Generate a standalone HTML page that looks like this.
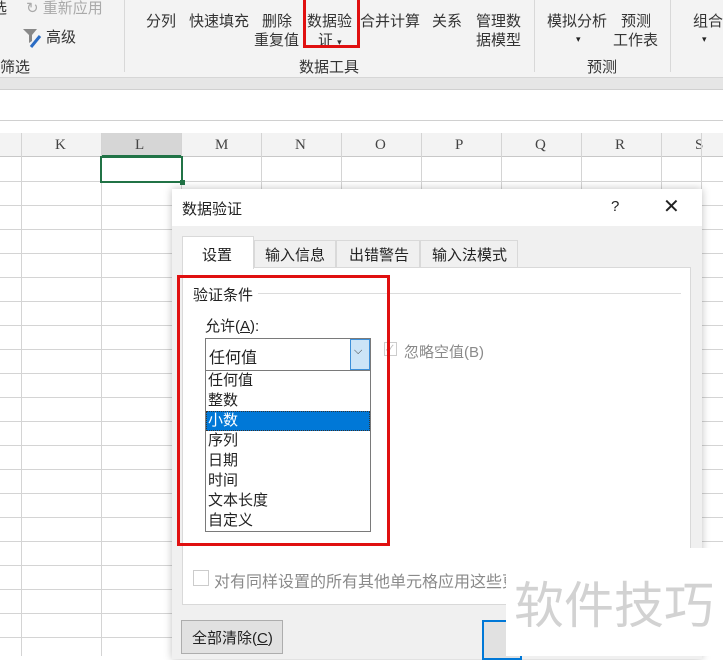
<!DOCTYPE html>
<html><head><meta charset="utf-8"><style>
*{margin:0;padding:0;box-sizing:border-box}
body{width:723px;height:656px;overflow:hidden;position:relative;background:#fff;font-family:"Liberation Sans","Noto Sans CJK SC",sans-serif;font-size:15px;color:#222}
.a{position:absolute;white-space:nowrap}
.rb{color:#333;font-size:15px}
.vl{position:absolute;width:1px;background:#d4d4d4}
.hl{position:absolute;height:1px;background:#d4d4d4}
</style></head><body>
<div class="a" style="left:0;top:0;width:723px;height:77px;background:#f3f3f3"></div>
<div class="a" style="left:0;top:77px;width:723px;height:13px;background:#e6e6e6;border-top:1px solid #d6d6d6;border-bottom:1px solid #d0d0d0"></div>
<div class="a" style="left:0;top:120px;width:723px;height:1px;background:#d0d0d0"></div>
<div class="vl" style="left:124px;top:0;height:72px;background:#d8d8d8"></div>
<div class="vl" style="left:534px;top:0;height:72px;background:#d8d8d8"></div>
<div class="vl" style="left:670px;top:0;height:72px;background:#d8d8d8"></div>
<span class="a rb" style="left:-8px;top:-3px">选</span>
<span class="a rb" style="left:26px;top:-3px;color:#aaa">↻ 重新应用</span>
<svg class="a" style="left:22px;top:27px" width="22" height="22" viewBox="0 0 22 22"><path d="M1 2h14l-5 6v6l-3 2V8z" fill="#888"/><path d="M9 20l9-11" stroke="#2b6cc4" stroke-width="3"/></svg>
<span class="a rb" style="left:46px;top:26px">高级</span>
<span class="a rb" style="left:0;top:56px">筛选</span>
<span class="a rb" style="left:146px;top:10px">分列</span>
<span class="a rb" style="left:189px;top:10px">快速填充</span>
<span class="a rb" style="left:262px;top:10px">删除</span>
<span class="a rb" style="left:254px;top:29px">重复值</span>
<span class="a rb" style="left:307px;top:10px">数据验</span>
<span class="a rb" style="left:318px;top:29px">证 <span style="font-size:9px">▾</span></span>
<span class="a rb" style="left:360px;top:10px">合并计算</span>
<span class="a rb" style="left:432px;top:10px">关系</span>
<span class="a rb" style="left:476px;top:10px">管理数</span>
<span class="a rb" style="left:476px;top:29px">据模型</span>
<span class="a rb" style="left:299px;top:56px">数据工具</span>
<span class="a rb" style="left:547px;top:10px">模拟分析</span>
<span class="a" style="left:576px;top:34px;font-size:9px">▾</span>
<span class="a rb" style="left:621px;top:10px">预测</span>
<span class="a rb" style="left:613px;top:29px">工作表</span>
<span class="a rb" style="left:587px;top:56px">预测</span>
<span class="a rb" style="left:693px;top:10px">组合</span>
<span class="a" style="left:702px;top:34px;font-size:9px">▾</span>
<div class="a" style="left:303px;top:-4px;width:57px;height:52px;border:3px solid #e01010"></div>
<div class="a" style="left:0;top:133px;width:723px;height:24px;background:#f3f3f3;border-bottom:1px solid #c8c8c8"></div>
<div class="a" style="left:101px;top:133px;width:81px;height:24px;background:#d6d6d6;border-bottom:2px solid #217346"></div>
<div id="g"></div>
<script>
var g=document.getElementById('g'),h='';
var cols=['K','L','M','N','O','P','Q','R','S'];
for(var i=0;i<9;i++){var x=21+i*80;h+='<div class="vl" style="left:'+x+'px;top:133px;height:523px"></div>';
h+='<span class="a" style="left:'+(x+34)+'px;top:137px;font-family:Liberation Serif,serif;font-size:15px;color:#444">'+cols[i]+'</span>';}
h+='<div class="vl" style="left:701px;top:133px;height:523px"></div>';
for(var y=181;y<656;y+=24)h+='<div class="hl" style="left:0;top:'+y+'px;width:723px"></div>';
g.innerHTML=h;
</script>
<div class="a" style="left:100px;top:156px;width:83px;height:27px;border:2px solid #217346"></div>
<div class="a" style="left:180px;top:180px;width:5px;height:5px;background:#217346"></div>
<div class="a" style="left:172px;top:189px;width:530px;height:470px;background:#f0f0f0;box-shadow:0 0 8px rgba(0,0,0,.25)"></div>
<div class="a" style="left:172px;top:189px;width:530px;height:37px;background:#fff"></div>
<span class="a" style="left:182px;top:198px">数据验证</span>
<span class="a" style="left:611px;top:198px;font-size:15px">?</span>
<span class="a" style="left:663px;top:194px;font-size:20px;font-weight:300">✕</span>
<div class="a" style="left:182px;top:267px;width:509px;height:338px;background:#fff;border:1px solid #d9d9d9"></div>
<div class="a" style="left:182px;top:236px;width:72px;height:33px;background:#fff;border:1px solid #d9d9d9;border-bottom:none"></div>
<div class="a" style="left:254px;top:240px;width:82px;height:28px;background:#f0f0f0;border:1px solid #d9d9d9"></div>
<div class="a" style="left:336px;top:240px;width:84px;height:28px;background:#f0f0f0;border:1px solid #d9d9d9"></div>
<div class="a" style="left:420px;top:240px;width:98px;height:28px;background:#f0f0f0;border:1px solid #d9d9d9"></div>
<span class="a" style="left:202px;top:244px">设置</span>
<span class="a" style="left:265px;top:244px">输入信息</span>
<span class="a" style="left:349px;top:244px">出错警告</span>
<span class="a" style="left:432px;top:244px">输入法模式</span>
<span class="a" style="left:193px;top:284px">验证条件</span>
<div class="hl" style="left:258px;top:293px;width:423px;background:#dcdcdc"></div>
<span class="a" style="left:205px;top:315px">允许(<u>A</u>):</span>
<div class="a" style="left:205px;top:338px;width:166px;height:33px;border:1px solid #7a7a7a;background:#fff"></div>
<span class="a" style="left:209px;top:344px;font-size:16px">任何值</span>
<div class="a" style="left:350px;top:339px;width:20px;height:31px;background:#cce4f7;border:1px solid #3c8fd9"></div>
<span class="a" style="left:354px;top:345px;font-size:11px;color:#333">⌵</span>
<div class="a" style="left:384px;top:342px;width:13px;height:14px;border:1px solid #ccc"></div>
<span class="a" style="left:386px;top:341px;font-size:11px;color:#bbb">✓</span>
<span class="a" style="left:404px;top:341px;color:#8a8a8a">忽略空值(B)</span>
<div class="a" style="left:205px;top:370px;width:166px;height:162px;border:1px solid #7a7a7a;background:#fff"></div>
<div class="a" style="left:206px;top:411px;width:164px;height:20px;background:#0078d7;border:1px dotted #333"></div>
<span class="a" style="left:208px;top:371px;line-height:20px;font-size:15px">任何值<br>整数<br><span style="color:#fff">小数</span><br>序列<br>日期<br>时间<br>文本长度<br>自定义</span>
<div class="a" style="left:177px;top:275px;width:213px;height:271px;border:3px solid #e01010"></div>
<div class="a" style="left:193px;top:570px;width:16px;height:16px;border:1px solid #ccc;background:#fff"></div>
<span class="a" style="left:214px;top:568px;color:#8a8a8a;font-size:16px">对有同样设置的所有其他单元格应用这些更改</span>
<div class="a" style="left:181px;top:620px;width:102px;height:34px;background:#e1e1e1;border:1px solid #adadad"></div>
<span class="a" style="left:192px;top:627px">全部清除(<u>C</u>)</span>
<div class="a" style="left:482px;top:620px;width:40px;height:40px;background:#e1e1e1;border:2px solid #0078d7"></div>
<div class="a" style="left:506px;top:548px;width:217px;height:108px;background:#fff"></div>
<span class="a" style="left:514px;top:566px;font-size:50px;color:#d2d2d2">软件技巧</span>
</body></html>
